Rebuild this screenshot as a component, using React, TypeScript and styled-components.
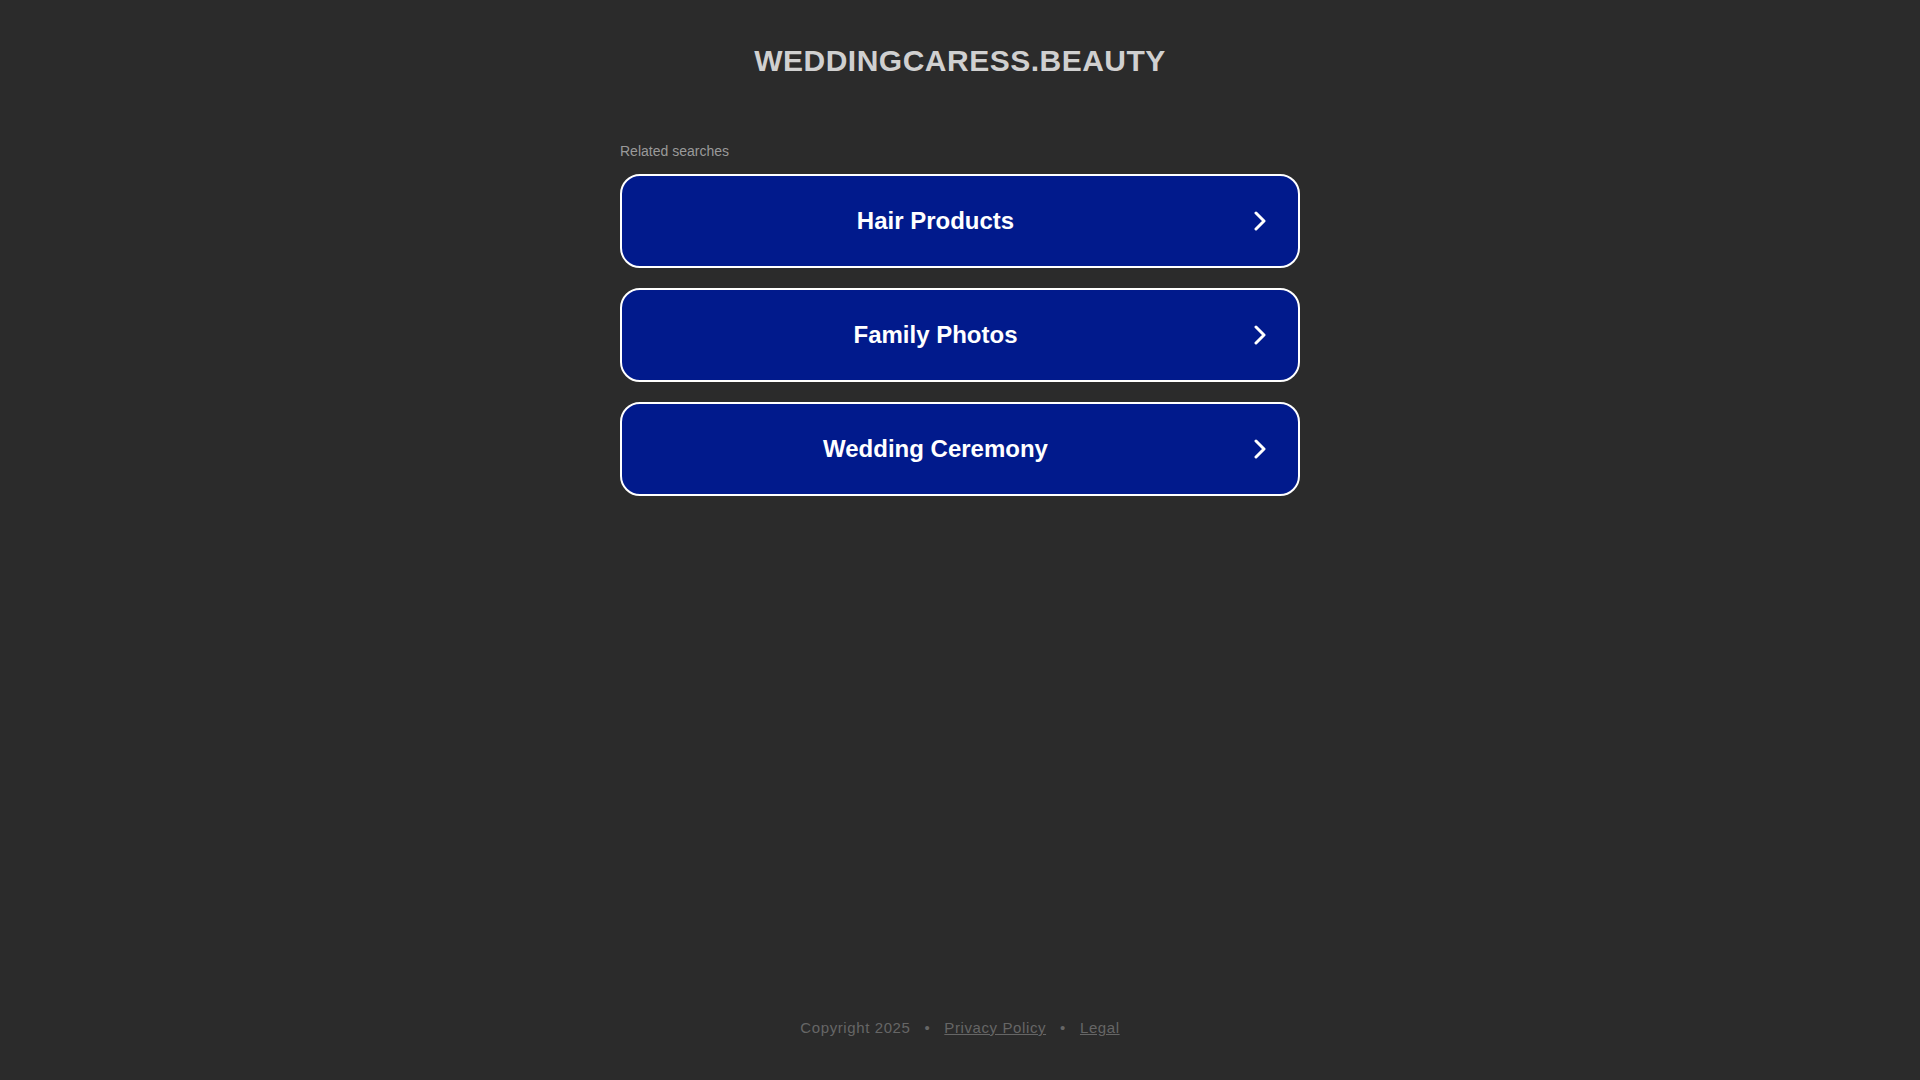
import React from "react";
import styled, { createGlobalStyle } from "styled-components";

const Global = createGlobalStyle`
  html, body {
    margin: 0;
    padding: 0;
    background: #2b2b2b;
  }
  body {
    font-family: "Liberation Sans", Arial, sans-serif;
  }
`;

const Page = styled.div`
  min-height: 100vh;
  display: flex;
  flex-direction: column;
  align-items: center;
  box-sizing: border-box;
`;

const Title = styled.h1`
  margin: 43px 0 0;
  font-size: 30px;
  line-height: 36px;
  font-weight: 700;
  letter-spacing: 0.5px;
  color: #d0d0d0;
`;

const Section = styled.div`
  width: 680px;
  margin-top: 64px;
  display: flex;
  flex-direction: column;
`;

const Label = styled.div`
  font-size: 14px;
  line-height: 16px;
  color: #9a9a9a;
  margin-bottom: 15px;
`;

const List = styled.div`
  display: flex;
  flex-direction: column;
  gap: 20px;
`;

const Item = styled.a`
  box-sizing: border-box;
  height: 94px;
  border: 2px solid #ffffff;
  border-radius: 20px;
  background: #011a8c;
  display: flex;
  align-items: center;
  padding: 0 32px 0 0;
  text-decoration: none;
  cursor: pointer;
`;

const ItemText = styled.span`
  flex: 1;
  text-align: center;
  color: #ffffff;
  font-size: 24px;
  font-weight: 700;
  padding-right: 5px;
`;

const Chevron = styled.svg`
  width: 12px;
  height: 20px;
  flex: none;
`;

const Footer = styled.div`
  margin-top: auto;
  padding-bottom: 42px;
  display: flex;
  align-items: center;
  gap: 14px;
  font-size: 15px;
  line-height: 20px;
  letter-spacing: 0.6px;
  color: #666666;
`;

const FootLink = styled.a`
  color: #666666;
  text-decoration: underline;
`;

const Dot = styled.span`
  color: #666666;
`;

const items = ["Hair Products", "Family Photos", "Wedding Ceremony"];

export default function App() {
  return (
    <>
      <Global />
      <Page>
        <Title>WEDDINGCARESS.BEAUTY</Title>
        <Section>
          <Label>Related searches</Label>
          <List>
            {items.map((t) => (
              <Item key={t}>
                <ItemText>{t}</ItemText>
                <Chevron viewBox="0 0 12 20">
                  <polyline
                    points="2,2 10,10 2,18"
                    fill="none"
                    stroke="#ffffff"
                    strokeWidth="3"
                    strokeLinecap="round"
                    strokeLinejoin="round"
                  />
                </Chevron>
              </Item>
            ))}
          </List>
        </Section>
        <Footer>
          <span>Copyright 2025</span>
          <Dot>•</Dot>
          <FootLink>Privacy Policy</FootLink>
          <Dot>•</Dot>
          <FootLink>Legal</FootLink>
        </Footer>
      </Page>
    </>
  );
}
